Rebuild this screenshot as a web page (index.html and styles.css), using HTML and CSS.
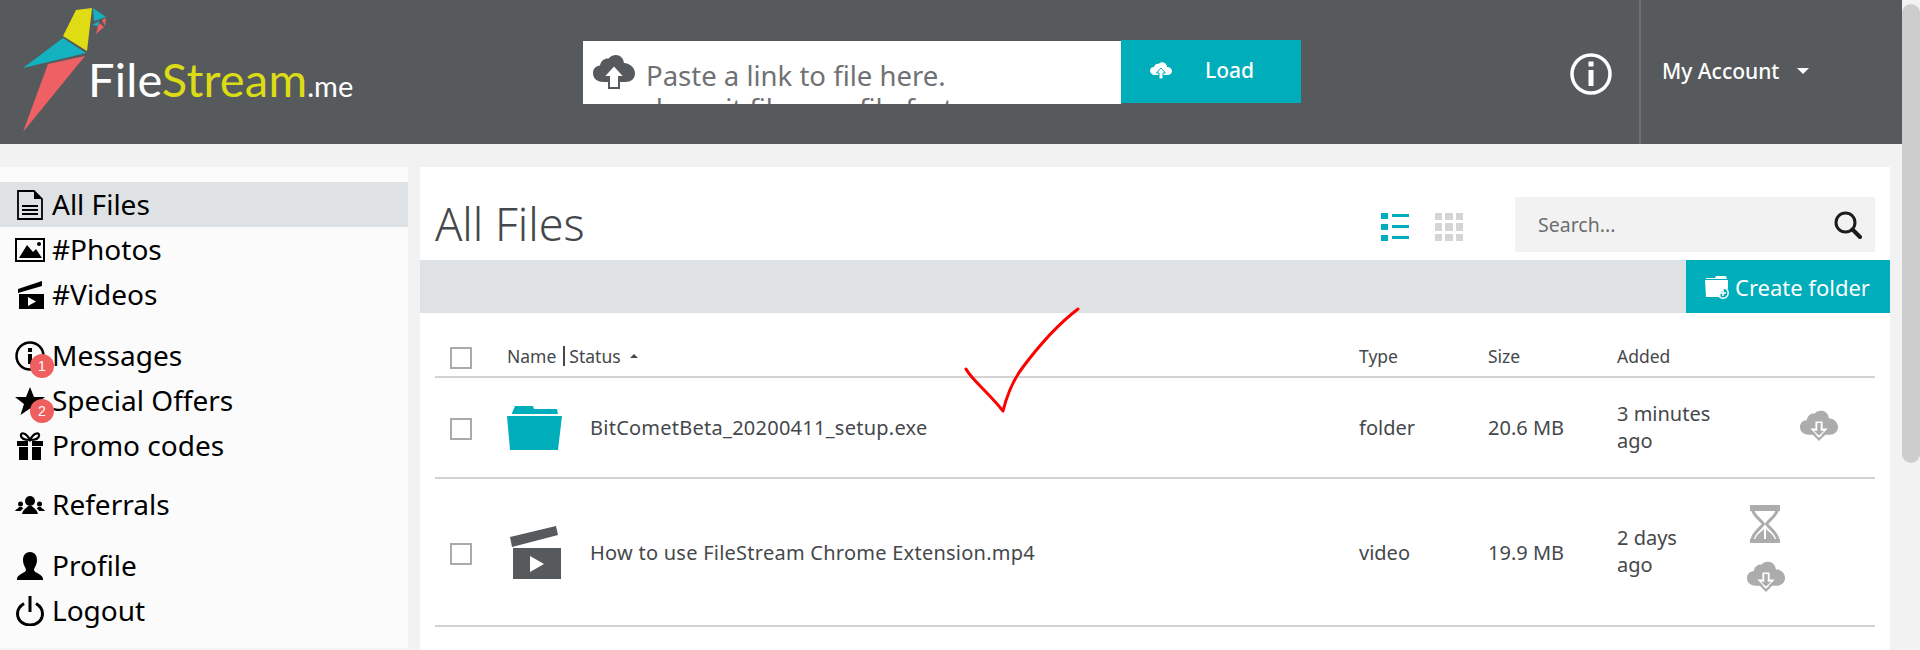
FILE: index.html
```html
<!DOCTYPE html>
<html lang="en">
<head>
<meta charset="utf-8">
<title>FileStream.me</title>
<link rel="stylesheet" href="styles.css">
</head>
<body>
<svg class="defs" width="0" height="0" aria-hidden="true">
  <symbol id="cloud-down" viewBox="0 0 37 30">
    <path d="M9 24C3.500 24 0 21 0 16.500C0 12.500 3 10 6.500 10C7.500 5 11 3 14 3.500C16 1 19.500 0 22.500 1C26 2 28 5 28 8C33 8 37 12 37 16.500C37 21 33.500 24 29 24Z"/>
    <path class="hole" d="M15 11H22V18H27L18.500 26.500L10 18H15Z"/>
    <path d="M16.800 12.500H20.200V20H23.500L18.500 24.800L13.500 20H16.800Z"/>
    <path d="M10 21.500L18.500 30L27 21.500H24.500L18.500 27L12.500 21.500Z"/>
  </symbol>
</svg>
<div class="page">
  <header class="topbar">
    <a class="logo">
      <svg width="370" height="144" viewBox="0 0 370 144">
        <polygon fill="#dfdc14" points="76,10 92,8 87,51 63,36"/>
        <polygon fill="#14b1c0" points="63,38 86,53 23,68"/>
        <polygon fill="#ef6065" points="85,56 23,132 48,64"/>
        <polygon fill="#14b1c0" points="93,8 106,17 94,21"/>
        <polygon fill="#14b1c0" points="92,25 99,21 98,26"/>
        <polygon fill="#ef6065" points="102,20 106,18 105,26"/>
        <polygon fill="#ef6065" points="99,23 104,27 96,34"/>
        <text class="logo-text" y="97" x="88"><tspan fill="#fff">File</tspan><tspan fill="#dcdc14">Stream</tspan><tspan class="logo-me" fill="#fff">.me</tspan></text>
      </svg>
    </a>
    <div class="upload">
      <div class="upload-field">
        <svg class="upload-icon" width="42" height="34" viewBox="0 0 42 34">
          <path fill="#575a5d" d="M10 27C4 27 0 23.500 0 18C0 13.500 3 11 7 10.500C8 5 12 3 15.500 3.500C17.500 1 20.500 0 23 0C27 0 30.500 3 31 8C37 8.500 42 12.500 42 18.500C42 23.500 38 27 32 27Z"/>
          <path fill="#fff" stroke="#575a5d" stroke-width="2" d="M21 10L32 22H26V33H16V22H10Z"/>
        </svg>
        <div class="upload-text">Paste a link to file here.<br>deposit file on a file fast, save your own url</div>
      </div>
      <button class="load-btn">
        <svg width="22" height="17" viewBox="0 0 22 17"><path fill="#fff" d="M5 13C2 13 0 11 0 8.500C0 6 2 5 4 5C5 2 7 1.500 8.500 2C10 0.500 12 0 13.500 0.500C16 1.500 17 3 17 5C20 5 22 7 22 9C22 11.500 20 13 17 13Z"/><path fill="#fff" stroke="#00adbb" d="M11 6L15.500 11H13V17H9V11H6.500Z"/></svg>
        <span>Load</span>
      </button>
    </div>
    <svg class="info" width="42" height="42" viewBox="0 0 42 42"><circle cx="21" cy="21" r="19" fill="none" stroke="#fff" stroke-width="3.500"/><rect x="18.500" y="8.500" width="5" height="5" fill="#fff"/><rect x="18.500" y="17" width="5" height="16" fill="#fff"/></svg>
    <div class="account"><span>My Account</span><i class="caret"></i></div>
  </header>

  <div class="layout">
    <nav class="sidebar">
      <ul class="group">
        <li class="item active">
          <svg class="ic" viewBox="0 0 30 30"><path fill="none" stroke="#000" stroke-width="1.800" d="M3 1H19L27 9V29H3Z"/><path fill="#000" d="M19 1L27 9H19ZM7 15H23V17H7ZM7 19H23V21H7ZM7 23H23V25H7Z"/></svg>
          All Files
        </li>
        <li class="item">
          <svg class="ic" viewBox="0 0 30 30"><path fill="none" stroke="#000" stroke-width="2" d="M1 4H29V26H1Z"/><path fill="#000" d="M4 23L12 10L18 17L21 14L27 23Z"/><circle cx="24" cy="9" r="2" fill="#000"/></svg>
          #Photos
        </li>
        <li class="item">
          <svg class="ic" viewBox="0 0 30 30"><path fill="#000" d="M3 9L27 1V6L3 13Z"/><path fill="#000" fill-rule="evenodd" d="M4 14H29V29H4ZM13 17V26L21 21.500Z"/></svg>
          #Videos
        </li>
      </ul>
      <ul class="group">
        <li class="item">
          <svg class="ic" viewBox="0 0 30 30"><circle cx="15" cy="15" r="13.500" fill="none" stroke="#000" stroke-width="2.500"/><rect x="13" y="7" width="4" height="4"/><rect x="13" y="13" width="4" height="10"/></svg>
          Messages
          <b class="badge">1</b>
        </li>
        <li class="item">
          <svg class="ic" viewBox="0 0 30 30"><path d="M15 1L19 11H30L21 18L24.500 29L15 22.500L5.500 29L9 18L0 11H11Z"/></svg>
          Special Offers
          <b class="badge">2</b>
        </li>
        <li class="item">
          <svg class="ic" viewBox="0 0 30 30"><path fill="none" stroke="#000" stroke-width="2.200" d="M15 9C11 1 5 1 6 5C6.500 8 11 9 15 9C19 9 23.500 8 24 5C25 1 19 1 15 9Z"/><path d="M2 10H13V15H2ZM17 10H28V15H17ZM4 16H13V29H4ZM17 16H26V29H17Z"/></svg>
          Promo codes
        </li>
      </ul>
      <ul class="group group-tight">
        <li class="item">
          <svg class="ic" viewBox="0 0 30 30"><circle cx="15" cy="11" r="5"/><path d="M7 24C8 19 12 18 13 16H17C18 18 22 19 23 24Z"/><circle cx="5.500" cy="14" r="2.500"/><circle cx="24.500" cy="14" r="2.500"/><path d="M0 21C1 19 3 19 4 17H7C7.500 18 8 18.500 8.500 18.500C7 19.500 6 20 6 21Z"/><path d="M30 21C29 19 27 19 26 17H23C22.500 18 22 18.500 21.500 18.500C23 19.500 24 20 24 21Z"/></svg>
          Referrals
        </li>
      </ul>
      <ul class="group">
        <li class="item">
          <svg class="ic" viewBox="0 0 30 30"><path d="M15 1C20 1 22 5 22 9C22 14 19 17 19 19C19 22 28 23 28 28V29H2V28C2 23 11 22 11 19C11 17 8 14 8 9C8 5 10 1 15 1Z"/></svg>
          Profile
        </li>
        <li class="item">
          <svg class="ic" viewBox="0 0 30 30"><path fill="none" stroke="#000" stroke-width="3" d="M9 7.500C5 10 2.500 13.500 2.500 17.500C2.500 24.500 8 29 15 29C22 29 27.500 24.500 27.500 17.500C27.500 13.500 25 10 21 7.500"/><rect x="13.500" y="0" width="3" height="16"/></svg>
          Logout
        </li>
      </ul>
    </nav>

    <main class="content">
      <div class="head">
        <h1 class="title">All Files</h1>
        <div class="views">
          <svg width="28" height="28" viewBox="0 0 28 28" fill="#00adbb"><rect y="0" width="7" height="6"/><rect y="11" width="7" height="6"/><rect y="22" width="7" height="6"/><rect x="11" y="1" width="17" height="3"/><rect x="11" y="12" width="17" height="3"/><rect x="11" y="23" width="17" height="3"/></svg>
          <svg width="28" height="28" viewBox="0 0 28 28" fill="#d4d5d6"><rect width="7" height="7"/><rect x="10" width="8" height="7"/><rect x="21" width="7" height="7"/><rect y="10" width="7" height="8"/><rect x="10" y="10" width="8" height="8"/><rect x="21" y="10" width="7" height="8"/><rect y="21" width="7" height="7"/><rect x="10" y="21" width="8" height="7"/><rect x="21" y="21" width="7" height="7"/></svg>
        </div>
        <div class="search">
          <span>Search...</span>
          <svg width="28" height="28" viewBox="0 0 28 28"><circle cx="11.500" cy="11.500" r="9.500" fill="none" stroke="#1c1c1c" stroke-width="3"/><path stroke="#1c1c1c" stroke-width="4" stroke-linecap="round" d="M18.500 18.500L26 26"/></svg>
        </div>
      </div>
      <div class="toolbar">
        <button class="create">
          <svg width="24" height="24" viewBox="0 0 24 24"><path fill="#fff" d="M1 3H10L11 1H21L22 4H1ZM0 5H23V14C19 13 15 16 15.500 22H1Z"/><circle cx="18" cy="18" r="5.200" fill="none" stroke="#fff" stroke-width="1.500"/><path stroke="#fff" stroke-width="1.500" d="M15 18H21M18 15V21"/></svg>
          Create folder
        </button>
      </div>
      <div class="row row-head">
        <i class="check"></i>
        <div class="col-name"><span>Name</span><i class="bar"></i><span>Status</span><i class="sort"></i></div>
        <div>Type</div>
        <div>Size</div>
        <div>Added</div>
      </div>
      <div class="row row-a">
        <i class="check"></i>
        <div class="col-file">
          <svg class="file-ic" width="83" height="44" viewBox="0 0 83 44"><path fill="#00adbb" d="M5 7L8 0H26L27 3H50L51 8H5ZM0 10H55L51 44H3Z"/></svg>
          <span class="file-name">BitCometBeta_20200411_setup.exe</span>
        </div>
        <div>folder</div>
        <div>20.6 MB</div>
        <div class="added">3 minutes ago</div>
        <div class="acts acts-a"><svg class="dl" width="38" height="31"><use href="#cloud-down"/></svg></div>
      </div>
      <div class="row row-b">
        <i class="check"></i>
        <div class="col-file">
          <svg class="file-ic" width="83" height="53" viewBox="0 0 83 53"><path fill="#575a5d" d="M3 11L49 0L51 9L5 21Z"/><path fill="#575a5d" fill-rule="evenodd" d="M6 22H54V53H6ZM23 30V46L37 38Z"/></svg>
          <span class="file-name">How to use FileStream Chrome Extension.mp4</span>
        </div>
        <div>video</div>
        <div>19.9 MB</div>
        <div class="added">2 days ago</div>
        <div class="acts acts-b">
          <svg class="hg" width="30" height="38" viewBox="0 0 30 38"><path fill="none" stroke="#acacac" stroke-width="3" d="M2 2H28C28 10 20 14 16.500 19C20 24 28 28 28 36H2C2 28 10 24 13.500 19C10 14 2 10 2 2Z"/><path fill="#acacac" d="M0 0H30V6H0ZM14 24V35H5C6 30 11 27 14 24ZM16 24C19 27 24 30 25 35H16ZM0 34H30V38H0Z"/></svg>
          <svg class="dl" width="38" height="31"><use href="#cloud-down"/></svg>
        </div>
      </div>
    </main>
  </div>
  <svg class="tick" width="120" height="120" viewBox="0 0 120 120"><path fill="none" stroke="#f00" stroke-width="3" stroke-linecap="round" stroke-linejoin="round" d="M5 69C11 80 26 91 42 111C46 95 52 80 62 67C74 51 96 25 117 9"/></svg>
</div>
<aside class="scrollbar"><div class="thumb"></div></aside>
</body>
</html>
```
FILE: styles.css
```css
* { box-sizing: border-box; }
html, body { margin: 0; height: 650px; overflow: hidden; }
body {
  display: flex;
  background: #f2f2f2;
  font-family: "Noto Sans", "Open Sans", sans-serif;
  color: #45484b;
}
.defs { position: absolute; }
.page { position: relative; width: 1902px; height: 650px; overflow: hidden; flex: none; }
.scrollbar { width: 18px; height: 650px; padding-top: 4px; background: #f2f2f2; flex: none; }
.thumb { height: 459px; background: #cdcdcd; border-radius: 9px; }

/* Top bar */
.topbar { display: flex; height: 144px; background: #575a5d; }
.logo { display: block; width: 583px; height: 144px; flex: none; }
.logo-text { font-family: Lato, sans-serif; font-weight: 400; font-size: 47px; letter-spacing: 0.2px; }
.logo-me { font-size: 29px; letter-spacing: 0; }
.upload { display: flex; width: 718px; height: 64px; margin-top: 40px; flex: none; }
.upload-field { display: flex; width: 538px; height: 63px; margin-top: 1px; padding: 14px 0 0 10px; gap: 11px; background: #fff; overflow: hidden; }
.upload-icon { flex: none; }
.upload-text { font-size: 27.500px; line-height: 33px; color: #6f7174; white-space: nowrap; margin-top: 4px; }
.load-btn { display: flex; align-items: center; width: 180px; height: 63px; padding: 0 0 3px 29px; gap: 33px; border: 0; background: #00adbb; color: #fff; font: 500 21px "Noto Sans", sans-serif; }
.info { margin: 53px 0 0 269px; flex: none; }
.account { display: flex; align-items: flex-start; width: 263px; margin-left: 27px; padding: 57px 0 0 21px; border-left: 2px solid #6f7275; color: #fff; font-size: 21px; line-height: 28px; font-weight: 500; flex: none; }
.account span { width: 135px; white-space: nowrap; }
.caret { width: 0; height: 0; margin-top: 11px; border: 6px solid transparent; border-top-color: #fff; border-bottom: 0; }

/* Layout */
.layout { display: flex; gap: 12px; margin-top: 23px; }

/* Sidebar */
.sidebar { width: 408px; height: 481px; padding-top: 15px; background: #fbfbfb; flex: none; }
.group { list-style: none; margin: 0 0 16px; padding: 0; }
.group-tight { margin-top: -2px; }
.item { position: relative; display: flex; align-items: center; height: 45px; padding: 0 0 2px 15px; gap: 7px; color: #000; font-size: 28px; white-space: nowrap; }
.item.active { background: #dee2e4; }
.ic { width: 30px; height: 30px; flex: none; margin-top: 2px; }
.badge { position: absolute; left: 30px; top: 21px; width: 24px; height: 24px; border-radius: 50%; background: #ef5f5f; color: #fff; font: 400 14px/24px "Liberation Sans", sans-serif; text-align: center; }

/* Main */
.content { width: 1470px; height: 483px; background: #fff; }
.head { display: flex; align-items: flex-start; height: 93px; padding-left: 15px; }
.title { width: 946px; margin: 27px 0 0; font-size: 45px; font-weight: 300; line-height: 60px; color: #45484b; flex: none; }
.views { display: flex; gap: 26px; width: 134px; margin-top: 46px; flex: none; }
.search { display: flex; align-items: center; justify-content: space-between; width: 360px; height: 55px; margin-top: 30px; padding: 0 13px 0 23px; background: #f2f2f2; color: #6c6e70; font-size: 19.500px; flex: none; }
.toolbar { display: flex; justify-content: flex-end; height: 53px; background: #dee2e4; }
.create { display: flex; align-items: center; width: 204px; height: 53px; padding: 0 0 0 19px; gap: 6px; border: 0; background: #00adbb; color: #fff; font: 400 22px "Noto Sans", sans-serif; white-space: nowrap; }

/* Rows */
.row { display: grid; grid-template-columns: 72px 852px 129px 129px 125px 133px; align-items: center; width: 1440px; margin-left: 15px; border-bottom: 2px solid #d3d3d3; font-size: 20px; }
.row-head { height: 65px; padding-top: 23px; font-size: 17.500px; }
.row-a { height: 101px; }
.row-b { height: 148px; }
.check { display: block; width: 22px; height: 22px; margin-left: 15px; border: 2px solid #aaa; }
.row-head .check { margin-top: 4px; }
.row-a .check { margin-top: 2px; }
.row-b .check { margin-top: 3px; }
.col-name { display: flex; align-items: center; }
.bar { width: 2px; height: 20px; margin: 0 4px 0 7px; background: #45484b; }
.sort { width: 0; height: 0; margin-left: 9px; border: 4.500px solid transparent; border-bottom-color: #45484b; border-top: 0; }
.col-file { display: flex; align-items: center; }
.file-ic { flex: none; }
.file-name { letter-spacing: 0.25px; }
.added { line-height: 27px; width: 100px; margin-top: -2px; }
.acts { display: flex; flex-direction: column; gap: 18px; }
.acts-a { padding-left: 58px; margin-top: -5px; }
.acts-b { padding-left: 5px; align-items: flex-start; margin-top: -7px; }
.hg { margin-left: 3px; }
.dl { fill: #acacac; }
.hole { fill: #fff; }

/* Hand-drawn annotation over the list */
.tick { position: absolute; left: 961px; top: 300px; }
```
